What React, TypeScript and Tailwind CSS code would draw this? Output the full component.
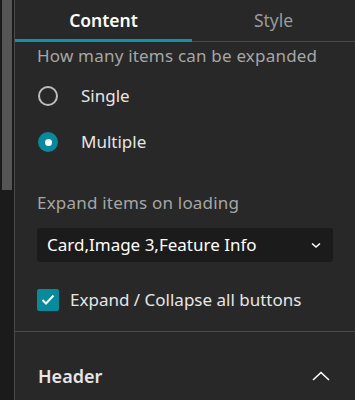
import React from "react";

export default function App() {
  return (
    <div className="flex h-[400px] w-[355px] overflow-hidden bg-[#282828]" style={{ fontFamily: "'Noto Sans', sans-serif" }}>
      <div className="flex w-[14px] shrink-0 flex-col bg-[#1b1b1b] px-[2px]">
        <div className="h-[190px] w-[10px] bg-[#555555]" />
      </div>
      <div className="w-px shrink-0 bg-[#4a4a4a]" />
      <div className="flex min-w-0 flex-1 flex-col">
        <div className="flex h-[42px] border-b border-[#4a4a4a]">
          <div className="relative flex w-[177px] items-center justify-center text-[17.5px] font-semibold text-white">
            Content
            <div className="absolute bottom-[-1px] left-0 right-0 h-[3px] bg-[#0895a8]" />
          </div>
          <div className="flex flex-1 items-center justify-center text-[17.5px] text-[#9a9a9a]">Style</div>
        </div>
        <div className="flex flex-col px-[22px]">
          <div className="mt-[2px] text-[17px] leading-[24px] tracking-[0.2px] text-[#a6a6a6]">How many items can be expanded</div>
          <div className="mt-[16px] flex h-[24px] items-center gap-[23px] pl-[1px]">
            <div className="h-[20px] w-[20px] rounded-full border-2 border-[#bdbdbd]" />
            <span className="text-[17px] leading-[24px] text-[#e6e6e6]">Single</span>
          </div>
          <div className="mt-[22px] flex h-[24px] items-center gap-[23px] pl-[1px]">
            <div className="flex h-[20px] w-[20px] items-center justify-center rounded-full bg-[#078a9d]">
              <div className="h-[7px] w-[7px] rounded-full bg-white" />
            </div>
            <span className="text-[17px] leading-[24px] text-[#e6e6e6]">Multiple</span>
          </div>
          <div className="mt-[37px] text-[17px] leading-[24px] tracking-[0.2px] text-[#a6a6a6]">Expand items on loading</div>
          <div className="mt-[13px] flex h-[34px] w-[296px] items-center justify-between rounded-[3px] bg-[#1b1b1b] pl-[10px] pr-[12px] text-[17px] leading-[24px] text-white">
            <span>Card,Image 3,Feature Info</span>
            <svg width="10" height="7" viewBox="0 0 10 7" fill="none" stroke="white" strokeWidth="1.6">
              <path d="M1 1.5 L5 5 L9 1.5" />
            </svg>
          </div>
          <div className="mt-[26px] flex items-center gap-[11px]">
            <div className="flex h-[22px] w-[22px] items-center justify-center rounded-[2px] bg-[#078a9d]">
              <svg width="14" height="12" viewBox="0 0 14 12" fill="none" stroke="white" strokeWidth="2">
                <path d="M1.5 6 L5 9.5 L12.5 1.5" />
              </svg>
            </div>
            <span className="text-[17px] leading-[24px] text-[#e6e6e6]">Expand / Collapse all buttons</span>
          </div>
        </div>
        <div className="mt-[19px] border-t border-[#4a4a4a]" />
        <div className="flex items-center justify-between pl-[23px] pr-[25px] pt-[32px]">
          <span className="text-[18px] font-semibold leading-[24px] text-[#e6e6e6]">Header</span>
          <svg width="18" height="10" viewBox="0 0 18 10" fill="none" stroke="white" strokeWidth="1.6">
            <path d="M1 9 L9 1.5 L17 9" />
          </svg>
        </div>
      </div>
    </div>
  );
}
